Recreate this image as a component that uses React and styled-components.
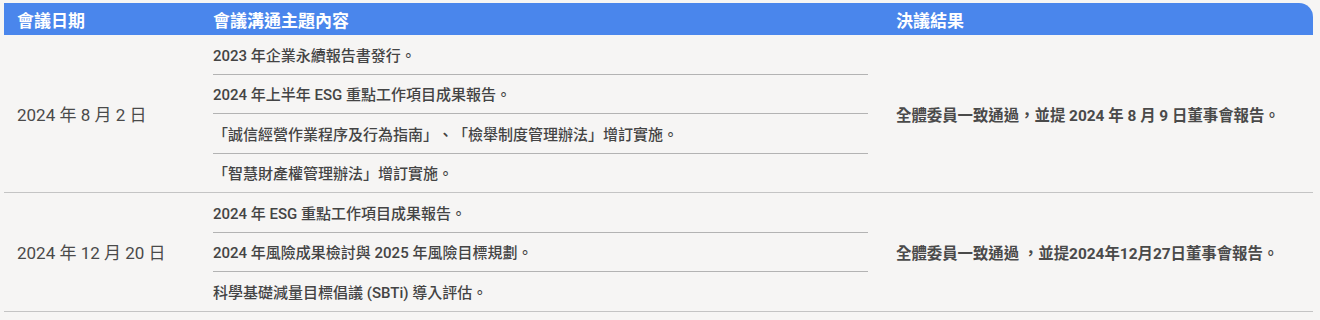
import styled, { createGlobalStyle } from "styled-components";

const GlobalStyle = createGlobalStyle`
  html, body {
    margin: 0;
    padding: 0;
    background: #f6f5f4;
  }
  body {
    font-family: Roboto, "Noto Sans CJK TC", sans-serif;
    color: #444;
    text-spacing-trim: space-all;
  }
`;

const Page = styled.div`
  padding: 3px 7px 0 4px;
  height: 320px;
  box-sizing: border-box;
  background: #f6f5f4;
`;

const Grid = styled.div`
  display: grid;
  grid-template-columns: 196px 668px 1fr;
`;

const Row = styled.div`
  display: contents;
`;

const HeadCell = styled.div`
  background: #4a86ec;
  color: #fff;
  font-weight: 700;
  font-size: 17px;
  height: 32px;
  display: flex;
  align-items: center;
  padding-left: ${(p) => p.$pad}px;
  border-top-right-radius: ${(p) => (p.$last ? "14px" : "0")};
`;

const DateCell = styled.div`
  display: flex;
  align-items: center;
  padding-left: 13px;
  font-size: 17px;
  color: #4a4a4a;
  border-bottom: 1px solid #c4c4c4;
`;

const TopicCell = styled.div`
  padding-left: 13px;
  display: flex;
  flex-direction: column;
  border-bottom: 1px solid #c4c4c4;
`;

const Topic = styled.div`
  height: 38.5px;
  display: flex;
  align-items: center;
  font-size: 15px;
  font-weight: 500;
  color: #444;
  white-space: nowrap;
  border-bottom: 1px solid #b3b3b3;
  &:last-child {
    border-bottom: none;
  }
`;

const ResultCell = styled.div`
  display: flex;
  align-items: center;
  padding-left: 28px;
  font-size: 15.4px;
  font-weight: 700;
  color: #4a4a4a;
  white-space: nowrap;
  border-bottom: 1px solid #c4c4c4;
`;

const meetings = [
  {
    date: "2024 年 8 月 2 日",
    topics: [
      "2023 年企業永續報告書發行。",
      "2024 年上半年 ESG 重點工作項目成果報告。",
      "「誠信經營作業程序及行為指南」、「檢舉制度管理辦法」增訂實施。",
      "「智慧財產權管理辦法」增訂實施。",
    ],
    result: "全體委員一致通過，並提 2024 年 8 月 9 日董事會報告。",
  },
  {
    date: "2024 年 12 月 20 日",
    topics: [
      "2024 年 ESG 重點工作項目成果報告。",
      "2024 年風險成果檢討與 2025 年風險目標規劃。",
      "科學基礎減量目標倡議 (SBTi) 導入評估。",
    ],
    result: "全體委員一致通過 ，並提2024年12月27日董事會報告。",
  },
];

const App = () => {
  return (
    <>
      <GlobalStyle />
      <Page>
        <Grid>
          <Row>
            <HeadCell $pad={13}>會議日期</HeadCell>
            <HeadCell $pad={13}>會議溝通主題內容</HeadCell>
            <HeadCell $pad={28} $last>決議結果</HeadCell>
          </Row>
          {meetings.map((m) => (
            <Row key={m.date}>
              <DateCell>{m.date}</DateCell>
              <TopicCell>
                {m.topics.map((t) => (
                  <Topic key={t}>{t}</Topic>
                ))}
              </TopicCell>
              <ResultCell>{m.result}</ResultCell>
            </Row>
          ))}
        </Grid>
      </Page>
    </>
  );
};

export default App;
